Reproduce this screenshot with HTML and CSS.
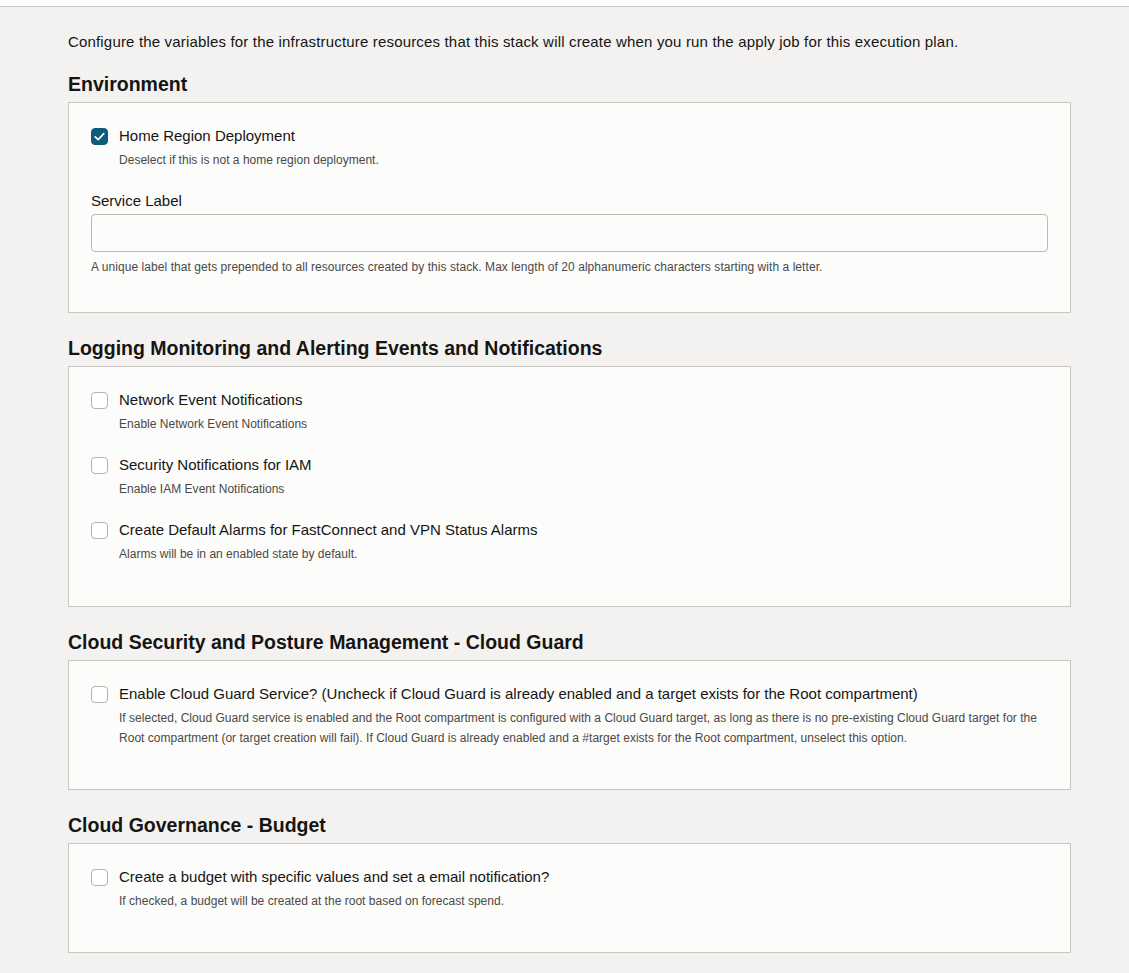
FILE: index.html
```html
<!DOCTYPE html>
<html lang="en">
<head>
<meta charset="utf-8">
<title>Variables</title>
<link rel="stylesheet" href="styles.css">
</head>
<body>
<div class="topbar"></div>
<main class="page">
  <p class="intro">Configure the variables for the infrastructure resources that this stack will create when you run the apply job for this execution plan.</p>

  <h2 class="section-title">Environment</h2>
  <section class="card">
    <div class="item">
      <label class="check-row">
        <span class="box checked"><svg viewBox="0 0 17 17" width="17" height="17"><path d="M4.2 8.8 L7.2 11.6 L12.8 5.6" fill="none" stroke="#fff" stroke-width="1.6" stroke-linecap="round" stroke-linejoin="round"/></svg></span>
        <span class="label">Home Region Deployment</span>
      </label>
      <p class="help">Deselect if this is not a home region deployment.</p>
    </div>
    <div class="field">
      <div class="field-label">Service Label</div>
      <div class="input"></div>
      <p class="help help-field">A unique label that gets prepended to all resources created by this stack. Max length of 20 alphanumeric characters starting with a letter.</p>
    </div>
  </section>

  <h2 class="section-title">Logging Monitoring and Alerting Events and Notifications</h2>
  <section class="card">
    <div class="item">
      <label class="check-row"><span class="box"></span><span class="label">Network Event Notifications</span></label>
      <p class="help">Enable Network Event Notifications</p>
    </div>
    <div class="item">
      <label class="check-row"><span class="box"></span><span class="label">Security Notifications for IAM</span></label>
      <p class="help">Enable IAM Event Notifications</p>
    </div>
    <div class="item">
      <label class="check-row"><span class="box"></span><span class="label">Create Default Alarms for FastConnect and VPN Status Alarms</span></label>
      <p class="help">Alarms will be in an enabled state by default.</p>
    </div>
  </section>

  <h2 class="section-title">Cloud Security and Posture Management - Cloud Guard</h2>
  <section class="card card-tight">
    <div class="item">
      <label class="check-row"><span class="box"></span><span class="label">Enable Cloud Guard Service? (Uncheck if Cloud Guard is already enabled and a target exists for the Root compartment)</span></label>
      <p class="help">If selected, Cloud Guard service is enabled and the Root compartment is configured with a Cloud Guard target, as long as there is no pre-existing Cloud Guard target for the Root compartment (or target creation will fail). If Cloud Guard is already enabled and a #target exists for the Root compartment, unselect this option.</p>
    </div>
  </section>

  <h2 class="section-title">Cloud Governance - Budget</h2>
  <section class="card card-tight">
    <div class="item">
      <label class="check-row"><span class="box"></span><span class="label">Create a budget with specific values and set a email notification?</span></label>
      <p class="help">If checked, a budget will be created at the root based on forecast spend.</p>
    </div>
  </section>
</main>
</body>
</html>
```

FILE: styles.css
```css
* { box-sizing: border-box; }
html, body {
  margin: 0;
  padding: 0;
  background: #f3f2f1;
  font-family: "Liberation Sans", Arial, sans-serif;
  color: #161513;
}
.topbar {
  height: 7px;
  background: #ffffff;
  border-bottom: 1px solid #c9c6c3;
}
.page {
  padding: 25px 58px 40px 68px;
}
.intro {
  margin: 0;
  font-size: 15px;
  line-height: 20px;
  letter-spacing: 0.17px;
}
.section-title {
  margin: 20px 0 6px;
  font-size: 19.5px;
  line-height: 24px;
  font-weight: bold;
}
.card + .section-title { margin-top: 23px; }
.card {
  background: #fcfcfb;
  border: 1px solid #c9c5c2;
  padding: 23px 22px 21px 22px;
}
.card-tight { padding-bottom: 20px; }
.item { margin-bottom: 21px; }
.check-row {
  display: flex;
  align-items: center;
  gap: 11px;
  height: 20px;
}
.box {
  flex: none;
  width: 17px;
  height: 17px;
  border: 1px solid #b6b2ae;
  border-radius: 4px;
  background: #fff;
  display: flex;
}
.box.checked {
  background: #0f5c7a;
  border-color: #0f5c7a;
}
.box.checked svg { margin: -1px; }
.label {
  font-size: 15px;
  line-height: 20px;
}
.help {
  margin: 4px 0 0 28px;
  font-size: 12px;
  line-height: 20px;
  color: #4b4946;
  letter-spacing: 0.02px;
}
.field { margin-bottom: 14px; }
.field-label {
  font-size: 15px;
  line-height: 20px;
}
.input {
  margin-top: 3px;
  height: 38px;
  border: 1px solid #bdb9b5;
  border-radius: 4px;
  background: #fcfcfb;
}
.help-field {
  margin: 5px 0 0 0;
  letter-spacing: 0.06px;
}
```
